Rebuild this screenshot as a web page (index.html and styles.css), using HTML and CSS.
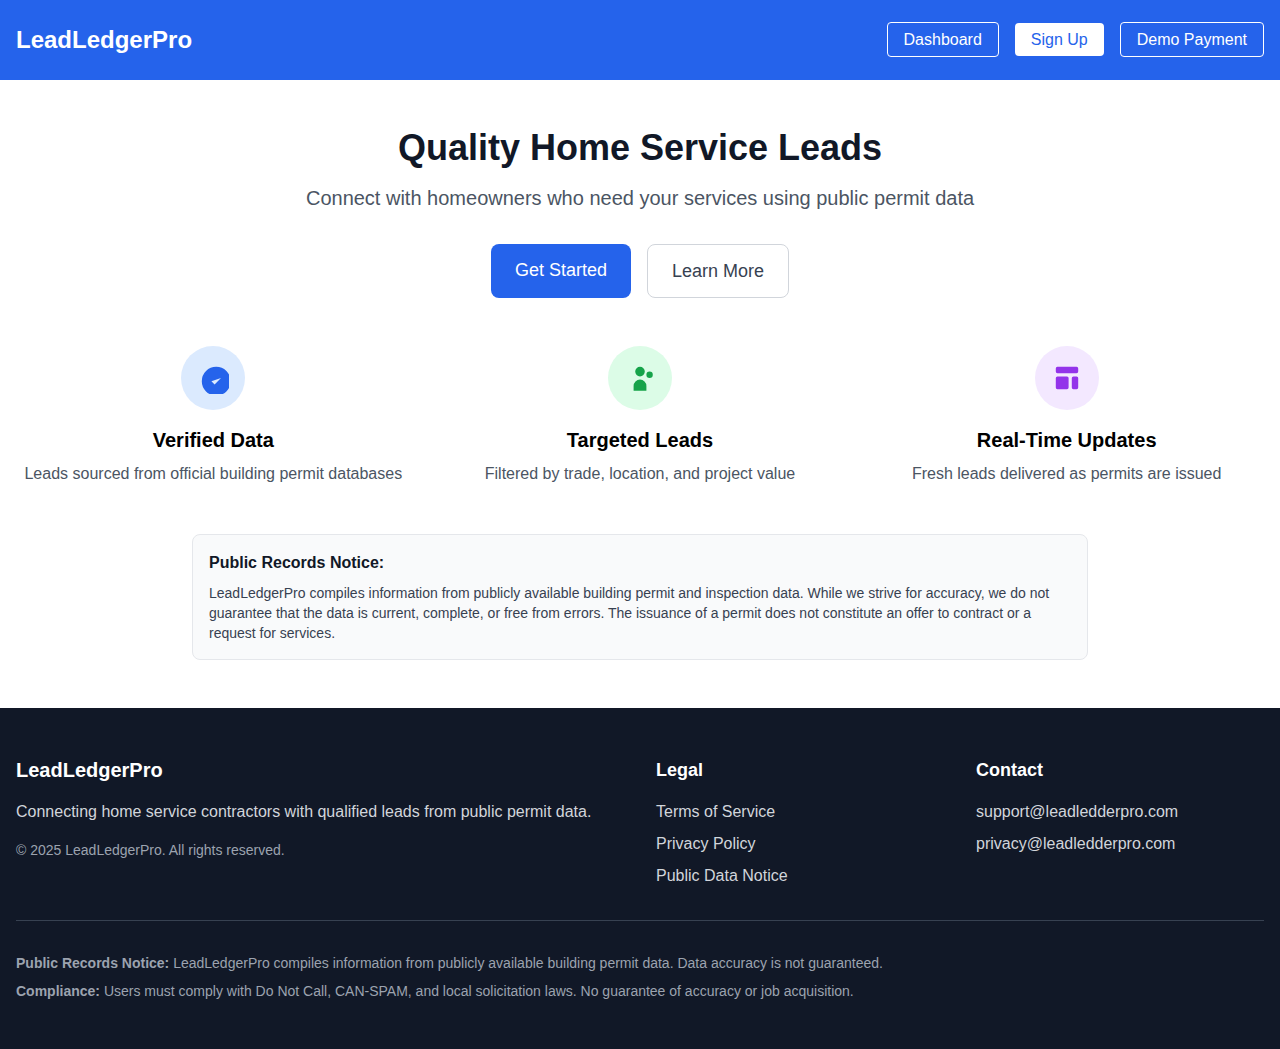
FILE: index.html
```html
<!DOCTYPE html>
<html lang="en">
<head>
  <meta charset="utf-8">
  <meta name="viewport" content="width=device-width, initial-scale=1">
  <title>LeadLedgerPro</title>
  <link rel="stylesheet" href="styles.css">
</head>
<body>
  <header class="site-header">
    <div class="container header-row">
      <div class="brand">LeadLedgerPro</div>
      <nav>
        <ul class="nav-list">
          <li><a class="nav-link nav-outline" href="#dashboard">Dashboard</a></li>
          <li><a class="nav-link nav-solid" href="#signup">Sign Up</a></li>
          <li><a class="nav-link nav-outline" href="#payment">Demo Payment</a></li>
        </ul>
      </nav>
    </div>
  </header>

  <main class="container main">
    <section class="hero">
      <h1 class="hero-title">Quality Home Service Leads</h1>
      <p class="hero-text">Connect with homeowners who need your services using public permit data</p>
      <div class="hero-actions">
        <a class="btn btn-primary" href="#signup">Get Started</a>
        <a class="btn btn-secondary" href="#features">Learn More</a>
      </div>
    </section>

    <section class="features" id="features">
      <div class="feature">
        <div class="feature-icon icon-blue">
          <svg class="icon" viewBox="0 0 20 20" fill="currentColor" aria-hidden="true"><path d="M9 12l2 2 4-4m6 2a9 9 0 11-18 0 9 9 0 0118 0z"/></svg>
        </div>
        <h2 class="feature-title">Verified Data</h2>
        <p class="feature-text">Leads sourced from official building permit databases</p>
      </div>
      <div class="feature">
        <div class="feature-icon icon-green">
          <svg class="icon" viewBox="0 0 20 20" fill="currentColor" aria-hidden="true"><path d="M13 6a3 3 0 11-6 0 3 3 0 016 0zM18 8a2 2 0 11-4 0 2 2 0 014 0zM14 15a4 4 0 00-8 0v3h8v-3z"/></svg>
        </div>
        <h2 class="feature-title">Targeted Leads</h2>
        <p class="feature-text">Filtered by trade, location, and project value</p>
      </div>
      <div class="feature">
        <div class="feature-icon icon-purple">
          <svg class="icon" viewBox="0 0 20 20" fill="currentColor" aria-hidden="true"><path d="M3 4a1 1 0 011-1h12a1 1 0 011 1v2a1 1 0 01-1 1H4a1 1 0 01-1-1V4zM3 10a1 1 0 011-1h6a1 1 0 011 1v6a1 1 0 01-1 1H4a1 1 0 01-1-1v-6zM14 9a1 1 0 00-1 1v6a1 1 0 001 1h2a1 1 0 001-1v-6a1 1 0 00-1-1h-2z"/></svg>
        </div>
        <h2 class="feature-title">Real-Time Updates</h2>
        <p class="feature-text">Fresh leads delivered as permits are issued</p>
      </div>
    </section>

    <section class="notice">
      <h2 class="notice-title">Public Records Notice:</h2>
      <p class="notice-text">LeadLedgerPro compiles information from publicly available building permit and inspection data. While we strive for accuracy, we do not guarantee that the data is current, complete, or free from errors. The issuance of a permit does not constitute an offer to contract or a request for services.</p>
    </section>
  </main>

  <footer class="site-footer">
    <div class="container">
      <div class="footer-grid">
        <div class="footer-about">
          <h2 class="footer-brand">LeadLedgerPro</h2>
          <p class="footer-tagline">Connecting home service contractors with qualified leads from public permit data.</p>
          <p class="footer-copy">© 2025 LeadLedgerPro. All rights reserved.</p>
        </div>
        <div>
          <h3 class="footer-title">Legal</h3>
          <ul class="footer-list">
            <li><a href="#terms">Terms of Service</a></li>
            <li><a href="#privacy">Privacy Policy</a></li>
            <li><a href="#public-data">Public Data Notice</a></li>
          </ul>
        </div>
        <div>
          <h3 class="footer-title">Contact</h3>
          <ul class="footer-list">
            <li><a href="mailto:support@leadledderpro.com">support@leadledderpro.com</a></li>
            <li><a href="mailto:privacy@leadledderpro.com">privacy@leadledderpro.com</a></li>
          </ul>
        </div>
      </div>
      <div class="footer-legal">
        <p><strong>Public Records Notice:</strong> LeadLedgerPro compiles information from publicly available building permit data. Data accuracy is not guaranteed.</p>
        <p><strong>Compliance:</strong> Users must comply with Do Not Call, CAN-SPAM, and local solicitation laws. No guarantee of accuracy or job acquisition.</p>
      </div>
    </div>
  </footer>
</body>
</html>
```
FILE: styles.css
```css
* {
  box-sizing: border-box;
}

body {
  margin: 0;
  background: #ffffff;
  color: #000000;
  font-family: "Liberation Sans", Arial, sans-serif;
  font-size: 16px;
  line-height: 24px;
}

h1,
h2,
h3,
p,
ul {
  margin: 0;
  padding: 0;
}

ul {
  list-style: none;
}

a {
  color: inherit;
  text-decoration: none;
}

.container {
  max-width: 1280px;
  margin: 0 auto;
  padding-left: 16px;
  padding-right: 16px;
}

/* Header */
.site-header {
  padding: 24px 0;
  background: #2563eb;
  color: #ffffff;
}

.header-row {
  display: flex;
  align-items: center;
  justify-content: space-between;
}

.brand {
  font-size: 24px;
  line-height: 32px;
  font-weight: 700;
}

.nav-list {
  display: flex;
  gap: 16px;
}

.nav-link {
  padding: 8px 16px;
  border-radius: 4px;
}

.nav-outline {
  border: 1px solid #ffffff;
}

.nav-solid {
  background: #ffffff;
  color: #2563eb;
}

/* Main */
.main {
  padding-top: 48px;
  padding-bottom: 48px;
}

.hero {
  margin-bottom: 48px;
  text-align: center;
}

.hero-title {
  margin-bottom: 16px;
  color: #111827;
  font-size: 36px;
  line-height: 40px;
  font-weight: 700;
}

.hero-text {
  margin-bottom: 32px;
  color: #4b5563;
  font-size: 20px;
  line-height: 28px;
}

.hero-actions {
  display: flex;
  justify-content: center;
  gap: 16px;
}

.btn {
  padding: 12px 24px;
  border-radius: 8px;
  font-size: 18px;
  line-height: 28px;
}

.btn-primary {
  background: #2563eb;
  color: #ffffff;
}

.btn-secondary {
  border: 1px solid #d1d5db;
  color: #374151;
}

.features {
  display: grid;
  grid-template-columns: repeat(3, 1fr);
  gap: 32px;
  margin-bottom: 48px;
}

.feature {
  text-align: center;
}

.feature-icon {
  display: flex;
  align-items: center;
  justify-content: center;
  width: 64px;
  height: 64px;
  margin: 0 auto 16px;
  border-radius: 50%;
}

.icon {
  width: 32px;
  height: 32px;
}

.icon-blue {
  background: #dbeafe;
  color: #2563eb;
}

.icon-green {
  background: #dcfce7;
  color: #16a34a;
}

.icon-purple {
  background: #f3e8ff;
  color: #9333ea;
}

.feature-title {
  margin-bottom: 8px;
  font-size: 20px;
  line-height: 28px;
  font-weight: 600;
}

.feature-text {
  color: #4b5563;
}

.notice {
  max-width: 896px;
  margin: 0 auto;
  padding: 16px;
  border: 1px solid #e5e7eb;
  border-radius: 8px;
  background: #f9fafb;
}

.notice-title {
  margin-bottom: 8px;
  color: #111827;
  font-size: 16px;
  line-height: 24px;
  font-weight: 600;
}

.notice-text {
  color: #374151;
  font-size: 14px;
  line-height: 20px;
}

/* Footer */
.site-footer {
  padding: 48px 0;
  background: #111827;
  color: #d1d5db;
}

.footer-grid {
  display: grid;
  grid-template-columns: repeat(4, 1fr);
  gap: 32px;
}

.footer-about {
  grid-column: span 2;
}

.footer-brand,
.footer-title {
  margin-bottom: 16px;
  color: #ffffff;
  line-height: 28px;
}

.footer-brand {
  font-size: 20px;
  font-weight: 700;
}

.footer-title {
  font-size: 18px;
  font-weight: 600;
}

.footer-tagline {
  margin-bottom: 16px;
}

.footer-copy {
  color: #9ca3af;
  font-size: 14px;
  line-height: 20px;
}

.footer-list {
  display: grid;
  gap: 8px;
}

.footer-legal {
  display: grid;
  gap: 8px;
  margin-top: 32px;
  padding-top: 32px;
  border-top: 1px solid #374151;
  color: #9ca3af;
  font-size: 14px;
  line-height: 20px;
}

@media (max-width: 767px) {
  .features,
  .footer-grid {
    grid-template-columns: 1fr;
  }

  .footer-about {
    grid-column: auto;
  }
}
```
